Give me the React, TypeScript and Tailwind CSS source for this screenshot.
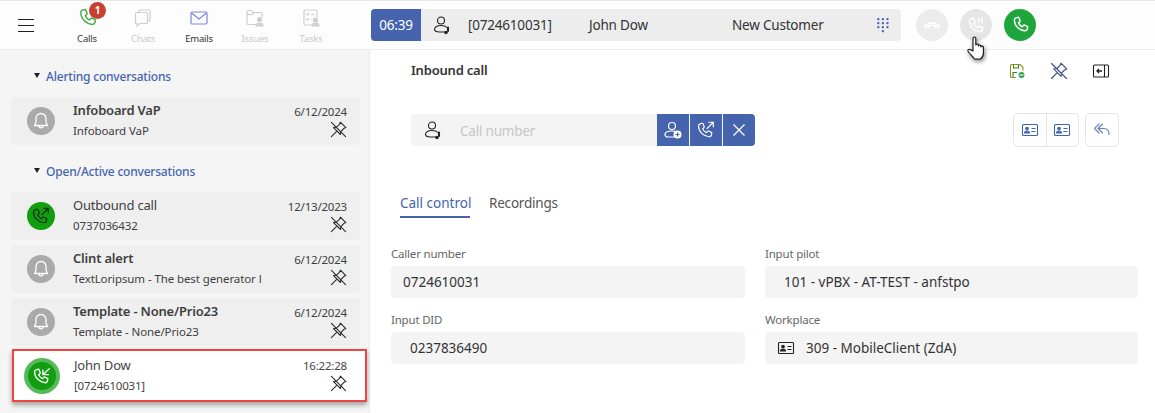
import React from "react";

const PHONE = "M6.5 3.2 8.6 2.6c.5-.1.9.1 1.1.5l1.3 3c.2.4.1.8-.2 1.1L9.3 8.7c.8 1.8 2.2 3.300 4 4.200l1.600-1.500c.3-.3.700-.4 1.100-.2l2.900 1.400c.4.2.6.6.5 1.100l-.6 2.100c-.3 1-1.200 1.700-2.200 1.600C10.200 17 4.900 11.800 4.800 5.500c0-1.100.7-2 1.700-2.300z";

const Phone = ({ c = "currentColor", s = 20, w = 1.4 }: { c?: string; s?: number; w?: number }) => (
  <svg width={s} height={s} viewBox="0 0 22 22" fill="none" stroke={c} strokeWidth={w} strokeLinejoin="round"><path d={PHONE} /></svg>
);
const PhoneOut = ({ c = "#fff", s = 20 }: { c?: string; s?: number }) => (
  <svg width={s} height={s} viewBox="0 0 22 22" fill="none" stroke={c} strokeWidth="1.300" strokeLinejoin="round" strokeLinecap="round"><path d={PHONE} transform="translate(-2 1)" /><path d="M12 9.500 19 2.500M14 2.500h5v5" /></svg>
);
const PhoneIn = ({ c = "#fff", s = 20 }: { c?: string; s?: number }) => (
  <svg width={s} height={s} viewBox="0 0 22 22" fill="none" stroke={c} strokeWidth="1.500" strokeLinejoin="round" strokeLinecap="round"><path d={PHONE} transform="translate(-2 1)" /><path d="M19 3 12 9.500M12 4.500v5h6" /></svg>
);
const Bell = ({ s = 20 }: { s?: number }) => (
  <svg width={s} height={s} viewBox="0 0 20 20" fill="none" stroke="#fff" strokeWidth="1.300" strokeLinejoin="round"><path d="M10 2.500c-3 0-5 2.300-5 5.200v3.300L3.500 14.500h13L15 11V7.700c0-2.900-2-5.200-5-5.200z" /><path d="M8 14.800c0 1.200.9 2 2 2s2-.8 2-2" /></svg>
);
const Pin = ({ c = "#2a2a2a", s = 17 }: { c?: string; s?: number }) => (
  <svg width={s} height={s} viewBox="0 0 18 18" fill="none" stroke={c} strokeWidth="1.150" strokeLinejoin="round" strokeLinecap="round"><path d="M1.500 1.500 16.500 16.500" /><path d="M11 1.200 16.800 7l-2.300 1-3 3.200-.4 3.100-7.400-7.400 3.100-.4 3.200-3z" /><path d="M6.800 11.200 1.500 16.500" /></svg>
);
const UserPhone = ({ s = 20, c = "#222" }: { s?: number; c?: string }) => (
  <svg width={s} height={s} viewBox="0 0 20 20" fill="none" stroke={c} strokeWidth="1.100" strokeLinecap="round"><circle cx="9" cy="5.500" r="3.500" /><path d="M15 12.500c-1.200-1.300-3.400-2-6-2-3.700 0-6.500 1.500-6.500 3.800 0 2 2.300 2.700 5 2.700h5.500" /><path d="M16 12.500v3.500" strokeWidth="2" /><circle cx="14" cy="17.500" r="1.200" fill={c} /></svg>
);
const IdCard = ({ c = "#4564ad", s = 18 }: { c?: string; s?: number }) => (
  <svg width={s} height={s} viewBox="0 0 18 18" fill="none" stroke={c} strokeWidth="1.100"><rect x="1.500" y="3.500" width="15" height="11" rx="1" /><circle cx="6" cy="7.500" r="1.300" fill={c} /><path d="M3.500 12c0-1.300 1-2 2.500-2s2.500.7 2.500 2z" fill={c} /><path d="M10.500 7.500h4M10.500 10.500h4" /></svg>
);
const Tri = () => <span className="w-0 h-0 border-l-[3.500px] border-r-[3.500px] border-t-[5px] border-l-transparent border-r-transparent border-t-[#222] mr-[6px] -mt-[3px]" />;

function NavItem({ label, active, children, badge }: { label: string; active?: boolean; children: React.ReactNode; badge?: boolean }) {
  return (
    <div className="w-[56px] flex flex-col items-center relative">
      <div className="h-[24px] flex items-center justify-center">{children}</div>
      <span className={`text-[9.500px] leading-[12px] mt-[3px] ${active ? "text-[#333]" : "text-[#c8c8c8]"}`}>{label}</span>
      {badge && <span className="absolute left-[30px] -top-[4px] w-[17px] h-[17px] rounded-full bg-[#c8402f] text-white text-[10px] font-bold flex items-center justify-center">1</span>}
    </div>
  );
}

function Conv({ icon, title, sub, date, bold }: { icon: React.ReactNode; title: string; sub: string; date: string; bold?: boolean }) {
  return (
    <div className="h-[48px] ml-[11px] mr-[9px] rounded-[4px] bg-[#efefef] flex items-center pl-[16px] pr-[13px]">
      <div className="w-[28px] flex justify-center">{icon}</div>
      <div className="ml-[18px] flex-1 min-w-0 mb-[3px]">
        <div className={`text-[13px] leading-[18px] text-[#404040] ${bold ? "font-semibold" : ""}`}>{title}</div>
        <div className="text-[11.500px] leading-[16px] mt-[4px] text-[#404040] whitespace-nowrap tracking-[-0.1px]">{sub}</div>
      </div>
      <div className="flex flex-col items-end">
        <span className="text-[11.500px] leading-[16px] text-[#404040] -translate-y-px">{date}</span>
        <Pin />
      </div>
    </div>
  );
}

const Circle = ({ bg, children, ring }: { bg: string; children: React.ReactNode; ring?: boolean }) => (
  <div className={`w-[28px] h-[28px] rounded-full flex items-center justify-center shrink-0 ${bg} ${ring ? "ring-[4px] ring-[#58b95a]" : ""}`}>{children}</div>
);

function Field({ label, value, icon, indent = "pl-[12px]" }: { label: string; value: string; icon?: React.ReactNode; indent?: string }) {
  return (
    <div className="flex flex-col">
      <span className="text-[11.500px] leading-[16px] text-[#666] mb-[4px]">{label}</span>
      <div className={`h-[32px] rounded-[4px] bg-[#f4f4f4] flex items-center text-[13.500px] tracking-normal text-[#333] ${indent}`}>
        {icon}
        {value}
      </div>
    </div>
  );
}

export default function App() {
  return (
    <div className="w-[1155px] h-[413px] overflow-hidden bg-white relative font-['Noto_Sans','Open_Sans',sans-serif] tracking-[-0.2px]">
      <div className="h-px bg-[#e8e8e8]" />
      <header className="h-[49px] flex items-center border-b border-[#ececec] bg-[#fdfdfd]">
        <div className="w-[59px] pl-[18px] flex flex-col gap-[5px]">
          <span className="w-[16px] h-px bg-[#222]" /><span className="w-[16px] h-px bg-[#222]" /><span className="w-[16px] h-px bg-[#222]" />
        </div>
        <div className="flex w-[312px] pt-[1px]">
          <NavItem label="Calls" active badge><Phone c="#3ca83c" s={22} /></NavItem>
          <NavItem label="Chats">
            <svg width="20" height="20" viewBox="0 0 20 20" fill="none" stroke="#cfcfcf" strokeWidth="1.200"><path d="M6 4V2.800c0-.5.400-.8.800-.8h9.400c.5 0 .8.300.8.800v9.400c0 .5-.3.800-.8.800H15" /><path d="M3.500 4.500h10c.6 0 1 .4 1 1v9c0 .6-.4 1-1 1H7l-3 2.500v-2.500h-.5c-.6 0-1-.4-1-1v-9c0-.6.400-1 1-1z" /></svg>
          </NavItem>
          <NavItem label="Emails" active>
            <svg width="18" height="16" viewBox="0 0 18 16" fill="none" stroke="#7d85e0" strokeWidth="1.200"><rect x="1" y="2" width="16" height="12" rx="1.200" /><path d="M1.500 3 9 9l7.500-6" /></svg>
          </NavItem>
          <NavItem label="Issues">
            <svg width="20" height="20" viewBox="0 0 20 20" fill="none" stroke="#cfcfcf" strokeWidth="1.200"><path d="M11 16.500H3c-.6 0-1-.4-1-1V3.500c0-.6.400-1 1-1h3.500l1.500 2h8c.6 0 1 .4 1 1V9" /><path d="M2 6.500h5.500l1-2" /><circle cx="14.500" cy="11.500" r="2" fill="#cfcfcf" /><path d="M11 18c0-2 1.500-3 3.500-3s3.500 1 3.500 3z" fill="#cfcfcf" /></svg>
          </NavItem>
          <NavItem label="Tasks">
            <svg width="20" height="20" viewBox="0 0 20 20" fill="none" stroke="#cfcfcf" strokeWidth="1.200"><path d="M11 17H4c-.6 0-1-.4-1-1V3c0-.6.400-1 1-1h11c.6 0 1 .4 1 1v6" /><path d="M5.500 6l1 1 1.500-1.800M10 6.500h3.500M5.500 11l1 1 1.500-1.800M10 11h1" /><circle cx="14.500" cy="12" r="2" fill="#cfcfcf" /><path d="M11 18c0-2 1.500-3 3.500-3s3.500 1 3.500 3z" fill="#cfcfcf" /></svg>
          </NavItem>
        </div>
        <div className="w-[530px] h-[32px] rounded-[4px] bg-[#ededed] flex items-center overflow-hidden text-[13.500px] text-[#333]">
          <div className="w-[50px] h-full bg-[#4564ad] text-white flex items-center justify-center">06:39</div>
          <div className="w-[47px] flex justify-start pl-[11px] shrink-0"><UserPhone /></div>
          <span className="w-[121px] shrink-0">[0724610031]</span>
          <span className="w-[143px] shrink-0">John Dow</span>
          <span className="w-[145px] shrink-0">New Customer</span>
          <svg width="14" height="16" viewBox="0 0 12 14" fill="#4564ad" className="shrink-0 -ml-[1px]">
            {[1, 5, 9].flatMap((x) => [1, 4.500, 8].map((y) => <rect key={`${x}${y}`} x={x} y={y} width="1.800" height="1.800" />))}
            <rect x="5" y="11.500" width="1.800" height="1.800" />
          </svg>
        </div>
        <div className="flex gap-[12px] ml-[15px]">
          <div className="w-[32px] h-[32px] rounded-full bg-[#ececec] flex items-center justify-center">
            <svg width="18" height="18" viewBox="0 0 18 18" fill="none" stroke="#fff" strokeWidth="1.600" strokeLinejoin="round"><path d="M2 11c0-2 3-4 7-4s7 2 7 4v.5h-3.500V10c-2-.8-5-.8-7 0v1.500H2z" /></svg>
          </div>
          <div className="w-[32px] h-[32px] rounded-full bg-[#e6e6e6] flex items-center justify-center">
            <svg width="20" height="20" viewBox="0 0 22 22" fill="none" stroke="#fff" strokeWidth="1.500" strokeLinejoin="round"><path d={PHONE} transform="translate(-1 1)" /><path d="M14 3v6M17.500 3v6" /></svg>
          </div>
          <div className="w-[32px] h-[32px] rounded-full bg-[#1ea63c] flex items-center justify-center"><Phone c="#fff" s={20} w={1.600} /></div>
        </div>
      </header>
      <div className="flex h-[363px]">
        <aside className="w-[370px] bg-[#f5f5f5] border-r border-[#ececec] pt-[19px]">
          <div className="flex items-center pl-[34px] h-[16px] text-[12px] font-medium text-[#4564ad]"><Tri />Alerting conversations</div>
          <div className="mt-[12px]">
            <Conv bold icon={<Circle bg="bg-[#aaaaaa]"><Bell /></Circle>} title="Infoboard VaP" sub="Infoboard VaP" date="6/12/2024" />
          </div>
          <div className="flex items-center pl-[34px] h-[16px] mt-[19px] text-[12px] font-medium text-[#4564ad]"><Tri />Open/Active conversations</div>
          <div className="mt-[12px] flex flex-col gap-[5px]">
            <Conv icon={<Circle bg="bg-[#119e0f]"><PhoneOut c="#1a2a1a" /></Circle>} title="Outbound call" sub="0737036432" date="12/13/2023" />
            <Conv bold icon={<Circle bg="bg-[#aaaaaa]"><Bell /></Circle>} title="Clint alert" sub="TextLoripsum - The best generator l" date="6/12/2024" />
            <Conv bold icon={<Circle bg="bg-[#aaaaaa]"><Bell /></Circle>} title="Template - None/Prio23" sub="Template - None/Prio23" date="6/12/2024" />
          </div>
          <div className="mt-[3px] ml-[12px] mr-[2px] h-[53px] bg-white border-[2px] border-[#ee4444] shadow-[0_3px_5px_rgba(0,0,0,0.35)] flex items-center pl-[14px] pr-[18px]">
            <Circle ring bg="bg-[#119e0f]"><PhoneIn /></Circle>
            <div className="ml-[18px] flex-1 mb-[2px]">
              <div className="text-[13px] leading-[18px] text-[#444]">John Dow</div>
              <div className="text-[11.500px] leading-[16px] mt-[4px] text-[#444]">[0724610031]</div>
            </div>
            <div className="flex flex-col items-end">
              <span className="text-[11.500px] leading-[16px] text-[#444] -translate-y-px">16:22:28</span>
              <Pin />
            </div>
          </div>
        </aside>
        <main className="flex-1 pl-[21px] pr-[17px] bg-white">
          <div className="flex items-center h-[20px] mt-[11px] pl-[20px]">
            <span className="text-[13px] font-semibold text-[#333] flex-1">Inbound call</span>
            <div className="flex items-center gap-[24px] pr-[28px]">
              <svg width="18" height="18" viewBox="0 0 18 18" fill="none" stroke="#3a7a2a" strokeWidth="1.100" strokeLinejoin="round"><path d="M8 15.500H3.500c-.6 0-1-.4-1-1v-11c0-.6.400-1 1-1h8.500l3 3v3" stroke="#8a9a20" /><path d="M5.500 2.500v3.500h5V2.500M5 15v-4.500h4" /><circle cx="13.500" cy="13" r="3.500" fill="#2da04a" stroke="#fff" /><path d="M11.500 13h4" stroke="#fff" /></svg>
              <Pin c="#3f4f85" s={18} />
              <svg width="18" height="18" viewBox="0 0 18 18" fill="none" stroke="#222" strokeWidth="1.100"><rect x="1.500" y="3" width="15" height="12" rx="1" /><path d="M12.500 3v12" /><path d="M10 9H5M7 7 5 9l2 2" stroke="#222" strokeWidth="1.300" /></svg>
            </div>
          </div>
          <div className="flex items-center justify-between mt-[32px] pl-[20px] pr-[19px] h-[34px]">
            <div className="w-[344px] h-[32px] rounded-[4px] bg-[#f4f4f4] flex items-center overflow-hidden">
              <div className="ml-[12px] w-[37px]"><UserPhone /></div>
              <span className="flex-1 text-[13.500px] text-[#c6c6c6] translate-y-px">Call number</span>
              <div className="flex gap-px h-full">
                <div className="w-[32px] bg-[#4564ad] flex items-center justify-center">
                  <svg width="20" height="20" viewBox="0 0 20 20" fill="none" stroke="#fff" strokeWidth="1.200"><circle cx="9" cy="6" r="3.500" /><path d="M12 17H5c-2 0-3-1-3-2.500C2 12 5 11 9 11c1 0 2 .1 3 .3" /><circle cx="14.500" cy="14.500" r="4" fill="#fff" stroke="none" /><path d="M12.500 14.500h4M14.500 12.500v4" stroke="#4564ad" /></svg>
                </div>
                <div className="w-[32px] bg-[#4564ad] flex items-center justify-center"><PhoneOut /></div>
                <div className="w-[32px] bg-[#4564ad] flex items-center justify-center">
                  <svg width="14" height="14" viewBox="0 0 14 14" stroke="#fff" strokeWidth="1.300"><path d="M1.500 1.500l11 11M12.500 1.500l-11 11" /></svg>
                </div>
              </div>
            </div>
            <div className="flex gap-[6px]">
              <div className="flex w-[66px] h-[34px] rounded-[5px] border border-[#e4e4e4]">
                <div className="flex-1 flex items-center justify-center border-r border-[#e4e4e4]"><IdCard /></div>
                <div className="flex-1 flex items-center justify-center"><IdCard /></div>
              </div>
              <div className="w-[34px] h-[34px] rounded-[5px] border border-[#e4e4e4] flex items-center justify-center">
                <svg width="18" height="18" viewBox="0 0 18 18" fill="none" stroke="#6c80c4" strokeWidth="1.100" strokeLinecap="round" strokeLinejoin="round"><path d="M6 3 1.500 7.500 6 12M9.500 3 5 7.500 9.500 12M5 7.500h6c3 0 5 2 5 6" /></svg>
              </div>
            </div>
          </div>
          <div className="flex mt-[47px] pl-[9px] h-[24px] items-start">
            <div className="w-[70px] h-[24px] border-b-[2px] border-[#4564ad] text-[13.500px] leading-[18px] text-[#4564ad] text-center whitespace-nowrap tracking-normal">Call control</div>
            <div className="ml-[19px] text-[13.500px] leading-[18px] text-[#555]">Recordings</div>
          </div>
          <div className="grid grid-cols-[354px_373px] gap-x-[20px] gap-y-[14px] mt-[28px]">
            <Field label="Caller number" value="0724610031" />
            <Field label="Input pilot" value="101 - vPBX - AT-TEST - anfstpo" indent="pl-[19px]" />
            <Field label="Input DID" value="0237836490" indent="pl-[19px]" />
            <Field label="Workplace" value="309 - MobileClient (ZdA)" indent="pl-[12px]" icon={<span className="mr-[11px] flex"><IdCard c="#222" s={18} /></span>} />
          </div>
        </main>
      </div>
      <svg className="absolute left-[966px] top-[35px] drop-shadow-[1px_2px_2px_rgba(0,0,0,0.5)]" width="22" height="26" viewBox="0 0 22 26" fill="#fff" stroke="#111" strokeWidth="1.100" strokeLinejoin="round">
        <path d="M7 16V3.500c0-2 2.800-2 2.800 0V10c0-1.300 2.600-1.300 2.600 0v1c0-1.300 2.500-1.300 2.500 0v1c0-1.200 2.500-1.200 2.500.3V18c0 2.500-1.500 5-3 6H8.500C7 22 5 20 2.500 17c-1.500-1.800.5-3.500 2-2.300z" />
      </svg>
    </div>
  );
}
